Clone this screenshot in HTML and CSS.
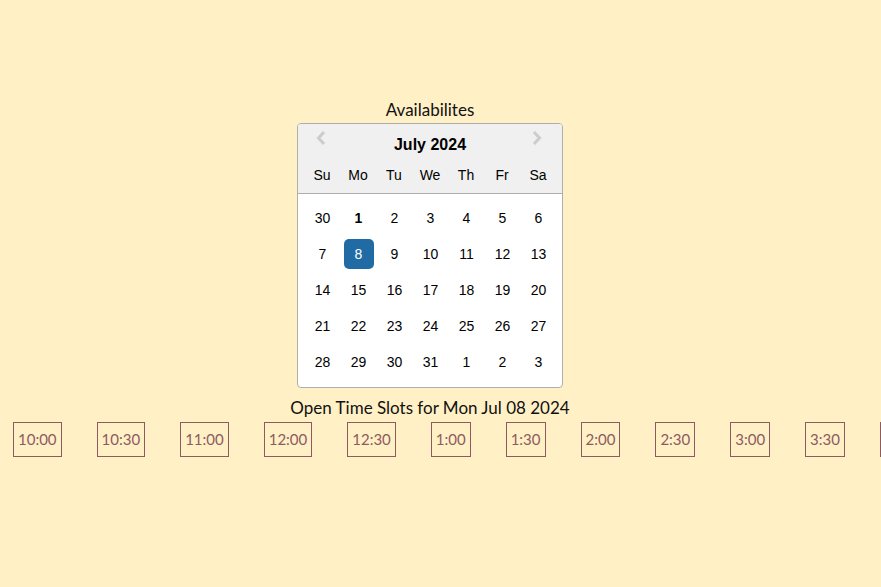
FILE: index.html
```html
<!DOCTYPE html>
<html>
<head>
<meta charset="utf-8">
<link rel="stylesheet" href="styles.css">
</head>
<body>
<div class="page">
  <div class="column">
    <div class="heading">Availabilites</div>
    <div class="calendar">
      <div class="cal-header">
        <button class="nav nav-prev" aria-label="Previous Month">
          <svg width="10" height="16" viewBox="0 0 10 16"><path d="M8 2 L2.5 8 L8 14" fill="none" stroke="#ccc" stroke-width="3"/></svg>
        </button>
        <div class="month-title">July 2024</div>
        <button class="nav nav-next" aria-label="Next Month">
          <svg width="10" height="16" viewBox="0 0 10 16"><path d="M2 2 L7.5 8 L2 14" fill="none" stroke="#ccc" stroke-width="3"/></svg>
        </button>
        <div class="day-names">
          <div class="dn">Su</div><div class="dn">Mo</div><div class="dn">Tu</div><div class="dn">We</div><div class="dn">Th</div><div class="dn">Fr</div><div class="dn">Sa</div>
        </div>
      </div>
      <div class="month">
        <div class="day">30</div><div class="day today">1</div><div class="day">2</div><div class="day">3</div><div class="day">4</div><div class="day">5</div><div class="day">6</div>
        <div class="day">7</div><div class="day selected">8</div><div class="day">9</div><div class="day">10</div><div class="day">11</div><div class="day">12</div><div class="day">13</div>
        <div class="day">14</div><div class="day">15</div><div class="day">16</div><div class="day">17</div><div class="day">18</div><div class="day">19</div><div class="day">20</div>
        <div class="day">21</div><div class="day">22</div><div class="day">23</div><div class="day">24</div><div class="day">25</div><div class="day">26</div><div class="day">27</div>
        <div class="day">28</div><div class="day">29</div><div class="day">30</div><div class="day">31</div><div class="day">1</div><div class="day">2</div><div class="day">3</div>
      </div>
    </div>
    <div class="slots-title">Open Time Slots for Mon Jul 08 2024</div>
  </div>
  <div class="slots">
    <div class="slot">10:00</div>
    <div class="slot">10:30</div>
    <div class="slot">11:00</div>
    <div class="slot">12:00</div>
    <div class="slot">12:30</div>
    <div class="slot">1:00</div>
    <div class="slot">1:30</div>
    <div class="slot">2:00</div>
    <div class="slot">2:30</div>
    <div class="slot">3:00</div>
    <div class="slot">3:30</div>
    <div class="slot">4:00</div>
  </div>
</div>
</body>
</html>
```

FILE: styles.css
```css
html, body {
  margin: 0;
  padding: 0;
  background: #fff0c6;
  overflow: hidden;
}
body {
  width: 881px;
  height: 587px;
}
.page {
  padding-top: 98px;
}
.column {
  width: 860px;
  display: flex;
  flex-direction: column;
  align-items: center;
}
.heading {
  font-family: "Lato", "Open Sans", sans-serif;
  font-size: 17px;
  line-height: 24px;
  color: #111;
  margin-bottom: 1px;
}
.calendar {
  width: 264px;
  border: 1px solid #aeaeae;
  border-radius: 4px;
  background: #fff;
  font-family: "Liberation Sans", Arial, sans-serif;
  color: #000;
  overflow: hidden;
}
.cal-header {
  position: relative;
  background: #f0f0f0;
  border-bottom: 1px solid #aeaeae;
  padding-top: 10px;
  height: 59px;
}
.month-title {
  text-align: center;
  font-weight: bold;
  font-size: 16px;
  line-height: 22px;
}
.nav {
  position: absolute;
  top: 6px;
  width: 16px;
  height: 16px;
  padding: 0;
  border: 0;
  background: none;
  display: flex;
  align-items: center;
  justify-content: center;
}
.nav-prev { left: 15px; }
.nav-next { right: 17px; }
.day-names {
  display: grid;
  grid-template-columns: repeat(7, 36px);
  justify-content: center;
  margin-top: 10px;
}
.dn {
  text-align: center;
  font-size: 14px;
  line-height: 18px;
  color: #000;
}
.month {
  display: grid;
  grid-template-columns: repeat(7, 36px);
  grid-auto-rows: 36px;
  justify-content: center;
  padding: 6px 0 7px 1px;
}
.day {
  margin: 3px;
  border-radius: 5px;
  display: flex;
  align-items: center;
  justify-content: center;
  font-size: 14px;
}
.day.today {
  font-weight: bold;
}
.day.selected {
  background: #216ba5;
  color: #fff;
}
.slots-title {
  font-family: "Lato", "Open Sans", sans-serif;
  font-size: 17px;
  line-height: 22px;
  color: #111;
  margin-top: 9px;
}
.slots {
  display: flex;
  gap: 35px;
  padding-left: 13px;
  margin-top: 3px;
  white-space: nowrap;
}
.slot {
  flex: none;
  border: 1px solid #8e5a5f;
  color: #8e5a5f;
  font-family: "Lato", "Open Sans", sans-serif;
  font-size: 15px;
  line-height: 33px;
  padding: 0 4px;
}
```
